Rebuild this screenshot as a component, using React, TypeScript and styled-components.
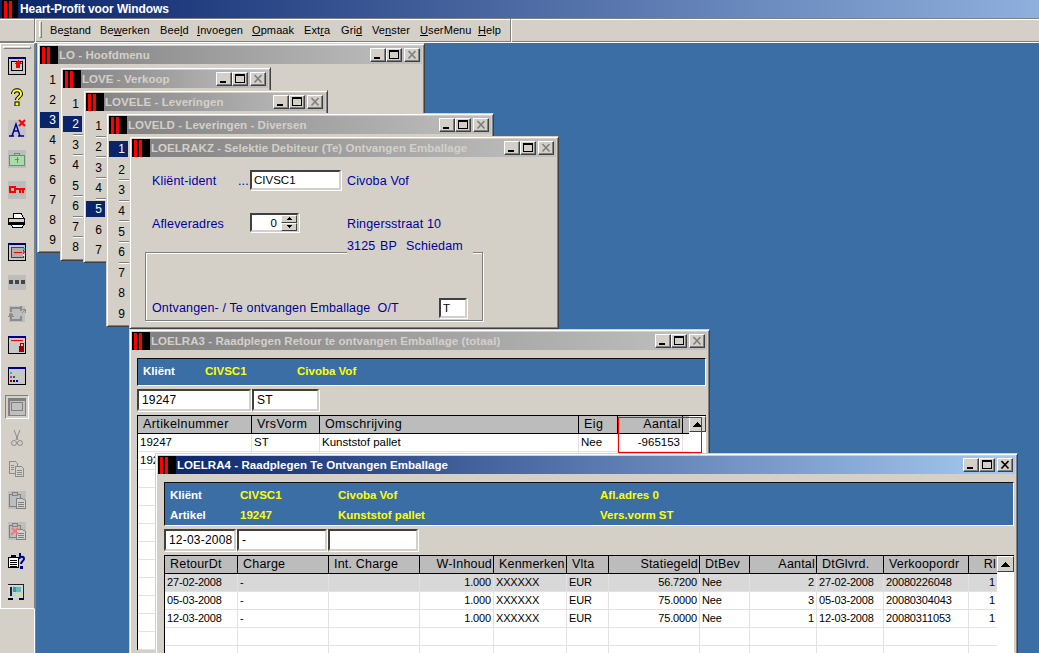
import React from "react";
import styled, { createGlobalStyle } from "styled-components";

const GlobalStyle = createGlobalStyle`
  html, body {
    margin: 0;
    padding: 0;
    overflow: hidden;
    background: #d4d0c8;
  }
  body {
    font-family: "Liberation Sans", Arial, sans-serif;
    font-size: 11px;
    color: #000;
  }
  * {
    box-sizing: border-box;
  }
`;

const Screen = styled.div`
  width: 1039px;
  height: 653px;
  display: flex;
  flex-direction: column;
  overflow: hidden;
  background: #d4d0c8;
`;

const AppTitle = styled.div`
  height: 18px;
  flex: none;
  display: flex;
  align-items: center;
  gap: 2px;
  padding-left: 2px;
  background: linear-gradient(90deg, #0a246a 0%, #8fb0dd 100%);
  color: #fff;
  font-weight: 700;
  font-size: 12px;
  letter-spacing: -0.1px;
`;

const MenuBar = styled.div`
  height: 25px;
  flex: none;
  display: flex;
  background: #d4d0c8;
  border-top: 1px solid #808080;
  border-bottom: 1px solid #fff;
  box-shadow: inset 0 1px 0 #fff, inset 0 -1px 0 #808080;
`;

const MenuSpacer = styled.div`
  width: 36px;
  flex: none;
  border-right: 1px solid #fff;
  box-shadow: inset -1px 0 0 #808080;
`;

const MenuBand = styled.div`
  width: 476px;
  flex: none;
  display: flex;
  align-items: center;
  padding: 0 0 2px 3px;
  border-right: 1px solid #fff;
  box-shadow: inset -1px 0 0 #808080;
`;

const Grip = styled.div`
  width: 3px;
  height: 17px;
  margin-right: 8px;
  border: 1px solid;
  border-color: #fff #808080 #808080 #fff;
`;

const MenuItem = styled.div<{ $w: number }>`
  width: ${(p) => p.$w}px;
  font-size: 11px;
  letter-spacing: 0.1px;
  white-space: nowrap;
  & u {
    text-underline-offset: 1px;
  }
`;

const Body = styled.div`
  flex: 1;
  display: flex;
  min-height: 0;
`;

const ToolColumn = styled.div`
  width: 36px;
  flex: none;
  background: #d4d0c8;
  border-right: 1px solid #808080;
  box-shadow: inset -1px 0 0 #fff;
`;

const ToolBar = styled.div`
  width: 35px;
  height: 566px;
  display: flex;
  flex-direction: column;
  align-items: center;
  padding: 2px 1px 0 0;
  border: 1px solid;
  border-color: #fff #808080 #fff #fff;
  box-shadow: -1px -1px 0 #808080;
`;

const ToolGrip = styled.div`
  width: 28px;
  height: 3px;
  flex: none;
  margin-bottom: 5px;
  border: 1px solid;
  border-color: #fff #808080 #808080 #fff;
`;

const ToolButton = styled.div<{ $pressed?: boolean }>`
  width: 24px;
  height: 24px;
  flex: none;
  margin-bottom: 7px;
  display: flex;
  align-items: center;
  justify-content: center;
  border: 1px solid;
  border-color: ${(p) =>
    p.$pressed ? "#808080 #fff #fff #808080" : "transparent"};
`;

const Desktop = styled.div`
  position: relative;
  flex: 1;
  background: #3a6ea5;
  overflow: hidden;
`;

const Frame = styled.div<{ $x: number; $y: number; $w: number; $h: number }>`
  position: absolute;
  left: ${(p) => p.$x - 36}px;
  top: ${(p) => p.$y - 43}px;
  width: ${(p) => p.$w}px;
  height: ${(p) => p.$h}px;
  padding: 2px;
  background: #d4d0c8;
  border: 1px solid;
  border-color: #d4d0c8 #404040 #404040 #d4d0c8;
  box-shadow: inset 1px 1px 0 #fff, inset -1px -1px 0 #808080;
`;

const Caption = styled.div<{ $active?: boolean }>`
  height: 18px;
  display: flex;
  align-items: center;
  padding-right: 2px;
  background: ${(p) =>
    p.$active
      ? "linear-gradient(90deg, #0a246a, #a6caf0)"
      : "linear-gradient(90deg, #808080, #c0c0c0)"};
  color: ${(p) => (p.$active ? "#fff" : "#d4d0c8")};
  font-weight: 700;
  font-size: 11.5px;
  letter-spacing: 0.05px;
  white-space: nowrap;
  overflow: hidden;
`;

const CaptionText = styled.span`
  flex: 1;
  margin-left: 1px;
`;

const CapButton = styled.div<{ $gap?: boolean; $dim?: boolean }>`
  width: 16px;
  height: 14px;
  flex: none;
  margin-left: ${(p) => (p.$gap ? "2px" : "0")};
  background: #d4d0c8;
  border: 1px solid;
  border-color: #fff #404040 #404040 #fff;
  box-shadow: inset -1px -1px 0 #808080;
  color: ${(p) => (p.$dim ? "#808080" : "#000")};
  & svg {
    display: block;
  }
`;

const MenuList = styled.div<{ $top: number }>`
  padding-top: ${(p) => p.$top}px;
`;

const MenuRow = styled.div<{ $h: number; $rule?: boolean }>`
  position: relative;
  height: ${(p) => p.$h}px;
  display: flex;
  align-items: center;
  ${(p) =>
    p.$rule &&
    `&::before {
      content: "";
      position: absolute;
      top: 0;
      left: 10px;
      width: 10px;
      height: 1px;
      background: #fff;
      box-shadow: 0 -1px 0 #808080;
    }`}
`;

const MenuNumber = styled.div<{ $selected?: boolean }>`
  width: 19px;
  height: 16px;
  line-height: 16px;
  padding-right: 3px;
  text-align: right;
  font-size: 12px;
  background: ${(p) => (p.$selected ? "#0a246a" : "transparent")};
  color: ${(p) => (p.$selected ? "#fff" : "#000")};
`;

const Form = styled.div`
  display: grid;
  grid-template-columns: 86px 12px 91px 1fr;
  grid-template-rows: 20px 19px;
  row-gap: 23px;
  align-items: center;
  padding: 13px 0 0 20px;
  color: #0000a0;
  font-size: 12.5px;
  letter-spacing: 0.15px;
`;

const FormLabel = styled.div`
  padding-top: 2px;
`;

const SunkenBox = styled.div`
  display: flex;
  align-items: center;
  background: #fff;
  color: #000;
  letter-spacing: 0;
  border: 2px solid;
  border-color: #404040 #d4d0c8 #d4d0c8 #404040;
  box-shadow: 1px 1px 0 #fff;
`;

const FormInput = styled(SunkenBox)`
  height: 20px;
  padding-left: 2px;
  font-size: 11.5px;
`;

const Spinner = styled(SunkenBox)`
  width: 49px;
  height: 19px;
  justify-content: flex-end;
  font-size: 11.5px;
  & > span {
    margin-right: 4px;
  }
`;

const SpinButtons = styled.div`
  width: 16px;
  display: flex;
  flex-direction: column;
`;

const SpinButton = styled.div`
  height: 8px;
  background: #d4d0c8;
  border: 1px solid;
  border-color: #fff #404040 #404040 #fff;
  display: flex;
  align-items: center;
  justify-content: center;
`;

const AddressText = styled(FormLabel)`
  margin-left: 6px;
`;

const GroupBox = styled.div`
  position: relative;
  grid-column: 1 / -1;
  margin: -3px 0 0 -7px;
  width: 338px;
  height: 69px;
  display: flex;
  align-items: flex-end;
  justify-content: space-between;
  padding: 0 15px 2px 6px;
  border: 1px solid #808080;
  box-shadow: 1px 1px 0 #fff, inset 1px 1px 0 #fff;
`;

const Legend = styled.div`
  position: absolute;
  left: 201px;
  top: -14px;
  width: 126px;
  height: 17px;
  line-height: 14px;
  white-space: pre;
  word-spacing: 1px;
  background: #d4d0c8;
`;

const GroupLabel = styled.div`
  white-space: pre;
  padding-bottom: 3px;
`;

const GroupInput = styled(SunkenBox)`
  width: 28px;
  height: 20px;
  padding-left: 2px;
  font-size: 11.5px;
`;

const InfoPanel = styled.div<{ $h: number }>`
  height: ${(p) => p.$h}px;
  margin-top: 8px;
  padding: 2px 0 0 5px;
  background: #3a6ea5;
  border: 1px solid;
  border-color: #101010 #fff #fff #101010;
  font-weight: 700;
  font-size: 11.5px;
`;

const InfoRow = styled.div<{ $cols: string }>`
  height: 20px;
  display: grid;
  grid-template-columns: ${(p) => p.$cols};
  align-items: center;
  color: #ffff00;
  & > :first-child {
    color: #fff;
  }
`;

const Fields = styled.div`
  display: flex;
  gap: 1px;
  margin-top: 3px;
`;

const Field = styled(SunkenBox)<{ $w: number }>`
  width: ${(p) => p.$w}px;
  height: 22px;
  padding-left: 3px;
  font-size: 12px;
  letter-spacing: 0.2px;
  white-space: nowrap;
`;

const Content = styled.div<{ $left: number }>`
  padding: 0 1px 0 ${(p) => p.$left}px;
`;

const GridFrame = styled.div`
  display: flex;
  margin-top: 4px;
  border-top: 1px solid #000;
  border-left: 1px solid #000;
  background: #fff;
`;

const GridBody = styled.div`
  flex: 1;
  min-width: 0;
  overflow: hidden;
`;

const GridRow = styled.div<{ $tpl: string; $head?: boolean; $selected?: boolean }>`
  display: grid;
  grid-template-columns: ${(p) => p.$tpl};
  height: 18px;
  background: ${(p) =>
    p.$head ? "#bcbcbc" : p.$selected ? "#d8d8d8" : "#fff"};
  border-bottom: 1px solid ${(p) => (p.$head ? "#000" : "#e2e2e2")};
`;

const HeadCell = styled.div<{ $right?: boolean; $track: number }>`
  padding: 0 ${(p) => (p.$right ? "1px" : "0")} 0 ${(p) => (p.$right ? "0" : "5px")};
  line-height: 17px;
  font-size: 12.5px;
  letter-spacing: ${(p) => p.$track}px;
  text-align: ${(p) => (p.$right ? "right" : "left")};
  border-right: 1px solid #000;
  white-space: nowrap;
  overflow: hidden;
`;

const Cell = styled.div<{ $right?: boolean; $size: number; $track: number }>`
  padding: 0 ${(p) => (p.$right ? "2px" : "0")} 0 ${(p) => (p.$right ? "0" : "2px")};
  line-height: 17px;
  font-size: ${(p) => p.$size}px;
  letter-spacing: ${(p) => p.$track}px;
  text-align: ${(p) => (p.$right ? "right" : "left")};
  border-right: 1px solid #e2e2e2;
  white-space: nowrap;
  overflow: hidden;
`;

const ScrollBar = styled.div`
  width: 17px;
  flex: none;
  background: #fff;
`;

const ScrollUp = styled.div`
  height: 16px;
  display: flex;
  align-items: center;
  justify-content: center;
  background: #d4d0c8;
  border: 1px solid;
  border-color: #fff #404040 #404040 #fff;
`;

const RedMark = styled.div`
  position: absolute;
  left: 488px;
  top: 87px;
  width: 84px;
  height: 36px;
  border: 1px solid #f00;
`;

const CapLogo = ({ w = 18 }: { w?: number }) => (
  <svg width={w} height="18" shapeRendering="crispEdges" style={{ flex: "none" }}>
    <rect width={w} height="18" fill="#000" />
    <rect x="2" y="1" width="3" height="17" fill="#f00" />
    <rect x="7" y="1" width="3" height="17" fill="#f00" />
  </svg>
);

const WinButtons = ({ dim }: { dim?: boolean }) => (
  <>
    <CapButton>
      <svg width="14" height="12" shapeRendering="crispEdges">
        <rect x="3" y="8" width="6" height="2" fill="#000" />
      </svg>
    </CapButton>
    <CapButton>
      <svg width="14" height="12" shapeRendering="crispEdges">
        <rect x="2.5" y="1.5" width="9" height="8" fill="none" stroke="#000" />
        <rect x="2" y="1" width="10" height="2" fill="#000" />
      </svg>
    </CapButton>
    <CapButton $gap $dim={dim}>
      <svg width="14" height="12">
        <path d="M3.5 2 L10.5 9.5 M10.5 2 L3.5 9.5" stroke="currentColor" strokeWidth="1.7" />
      </svg>
    </CapButton>
  </>
);

const Win = (props: {
  x: number;
  y: number;
  w: number;
  h: number;
  title: string;
  active?: boolean;
  children?: React.ReactNode;
}) => (
  <Frame $x={props.x} $y={props.y} $w={props.w} $h={props.h}>
    <Caption $active={props.active}>
      <CapLogo />
      <CaptionText>{props.title}</CaptionText>
      <WinButtons dim={!props.active} />
    </Caption>
    {props.children}
  </Frame>
);

const NumberMenu = (props: {
  count: number;
  pitch: number;
  top: number;
  selected: number;
  rules?: number[];
}) => (
  <MenuList $top={props.top}>
    {Array.from({ length: props.count }, (_, i) => i + 1).map((n) => (
      <MenuRow key={n} $h={props.pitch} $rule={props.rules?.includes(n)}>
        <MenuNumber $selected={n === props.selected}>{n}</MenuNumber>
      </MenuRow>
    ))}
  </MenuList>
);

type Column = { title: string; width: number; right?: boolean };

const Arrow = () => (
  <svg width="9" height="5" shapeRendering="crispEdges">
    <path d="M4 0h1v1h1v1h1v1h1v1h1v1H0V4h1V3h1V2h1V1h1z" fill="#000" />
  </svg>
);

const DataGrid = (props: {
  columns: Column[];
  rows: string[][];
  blank: number;
  selected?: number;
  headTrack: number;
  cellSize: number;
  cellTrack: number;
}) => {
  const tpl = props.columns.map((c) => `${c.width}px`).join(" ");
  return (
    <GridFrame>
      <GridBody>
        <GridRow $tpl={tpl} $head>
          {props.columns.map((c, i) => (
            <HeadCell key={i} $right={c.right} $track={props.headTrack}>
              {c.title}
            </HeadCell>
          ))}
        </GridRow>
        {props.rows.map((r, ri) => (
          <GridRow key={ri} $tpl={tpl} $selected={ri === props.selected}>
            {props.columns.map((c, i) => (
              <Cell key={i} $right={c.right} $size={props.cellSize} $track={props.cellTrack}>
                {r[i]}
              </Cell>
            ))}
          </GridRow>
        ))}
        {Array.from({ length: props.blank }).map((_, ri) => (
          <GridRow key={ri} $tpl={tpl}>
            {props.columns.map((c, i) => (
              <Cell key={i} $size={props.cellSize} $track={0} />
            ))}
          </GridRow>
        ))}
      </GridBody>
      <ScrollBar>
        <ScrollUp>
          <Arrow />
        </ScrollUp>
      </ScrollBar>
    </GridFrame>
  );
};

const Svg = ({ children }: { children: React.ReactNode }) => (
  <svg width="18" height="18" viewBox="0 0 18 18" shapeRendering="crispEdges">
    {children}
  </svg>
);

const WinShell = ({ children }: { children?: React.ReactNode }) => (
  <>
    <rect x="0.5" y="0.5" width="17" height="17" fill="#c8c8c8" stroke="#000" />
    <rect x="0" y="0" width="18" height="2" fill="#000080" />
    {children}
  </>
);

const toolIcons: { key: string; pressed?: boolean; node: React.ReactNode }[] = [
  {
    key: "up",
    node: (
      <WinShell>
        <rect x="3.5" y="4.5" width="11" height="9" fill="#d4d0c8" stroke="#000" />
        <path d="M10 3l4 4h-2v4H8V7H6z" fill="#f00" />
      </WinShell>
    ),
  },
  {
    key: "help",
    node: (
      <g shapeRendering="auto">
        <path d="M5 6c0-5 8-5 8 0c0 3-4 3-4 6" fill="none" stroke="#000" strokeWidth="4" />
        <path d="M5 6c0-5 8-5 8 0c0 3-4 3-4 6" fill="none" stroke="#ff0" strokeWidth="2" />
        <rect x="7" y="14" width="4" height="4" fill="#ff0" stroke="#000" />
      </g>
    ),
  },
  {
    key: "font",
    node: (
      <>
        <rect width="18" height="18" y="1" fill="#c4c4c4" />
        <path d="M1 17h5M10 17h6M4 17L8 5l4 12M5.5 12h5" fill="none" stroke="#000090" strokeWidth="1.5" shapeRendering="auto" />
        <path d="M11 1l6 6M17 1l-6 6" stroke="#f00" strokeWidth="2" shapeRendering="auto" />
      </>
    ),
  },
  {
    key: "case",
    node: (
      <>
        <rect width="18" height="18" fill="#bdbdbd" />
        <rect x="1.5" y="5.5" width="15" height="10" fill="#a8dcA8" stroke="#6c8c78" />
        <path d="M6.5 5V3.5h5V5M9 7v6M7 9h4" fill="none" stroke="#6c8c78" />
      </>
    ),
  },
  {
    key: "key",
    node: (
      <>
        <rect width="18" height="18" fill="#bdbdbd" />
        <rect x="2" y="6" width="5" height="5" fill="none" stroke="#f00" strokeWidth="2" />
        <rect x="7" y="7" width="10" height="2" fill="#f00" />
        <rect x="11" y="9" width="2" height="3" fill="#f00" />
        <rect x="14" y="9" width="2" height="3" fill="#f00" />
      </>
    ),
  },
  {
    key: "print",
    node: (
      <>
        <path d="M5.5 1.5h8l2 5h-10z" fill="#fff" stroke="#000" />
        <rect x="0.5" y="6.5" width="16" height="6" fill="#d4d0c8" stroke="#000" />
        <rect x="1" y="10" width="15" height="2" fill="#000" />
        <path d="M3.5 12.5h12l-1 3h-10z" fill="#fff" stroke="#000" />
      </>
    ),
  },
  {
    key: "window",
    node: (
      <WinShell>
        <rect x="3.5" y="4.5" width="12" height="10" fill="#b0b0b0" stroke="#444" />
        <rect x="6" y="9" width="8" height="1" fill="#f00" />
        <rect x="15" y="5" width="2" height="2" fill="#0cc" />
        <rect x="15" y="8" width="2" height="2" fill="#f0f" />
        <rect x="15" y="11" width="2" height="2" fill="#ff0" />
      </WinShell>
    ),
  },
  {
    key: "dots",
    node: (
      <>
        <rect width="18" height="15" y="1" fill="#bdbdbd" />
        <rect x="1" y="6" width="4" height="4" fill="#444" />
        <rect x="7" y="6" width="4" height="4" fill="#444" />
        <rect x="13" y="6" width="4" height="4" fill="#444" />
      </>
    ),
  },
  {
    key: "swap",
    node: (
      <>
        <rect width="16" height="16" x="1" y="1" fill="#bdbdbd" />
        <path d="M3 7V3h10M13 1v5M3 11v4h10v-4M3 8l2 3H1z" fill="none" stroke="#8c8c8c" strokeWidth="1.2" />
        <path d="M14 4h3v4M14 8l4-4" fill="none" stroke="#8c8c8c" />
      </>
    ),
  },
  {
    key: "lock",
    node: (
      <WinShell>
        <rect x="3" y="4" width="12" height="1" fill="#f00" />
        <rect x="11" y="10" width="5" height="6" fill="#900" />
        <rect x="12" y="7" width="3" height="3" fill="none" stroke="#900" />
      </WinShell>
    ),
  },
  {
    key: "palette",
    node: (
      <WinShell>
        <rect x="2" y="5" width="2" height="2" fill="#0cc" />
        <rect x="2" y="9" width="2" height="2" fill="#f0f" />
        <rect x="5" y="9" width="2" height="2" fill="#080" />
        <rect x="2" y="13" width="2" height="2" fill="#800" />
        <rect x="5" y="13" width="2" height="2" fill="#000" />
        <rect x="8" y="13" width="2" height="2" fill="#00c" />
      </WinShell>
    ),
  },
  {
    key: "pressed",
    pressed: true,
    node: (
      <>
        <rect x="0.5" y="0.5" width="17" height="17" fill="#c0c0c0" stroke="#808080" strokeWidth="2" />
        <rect x="0" y="0" width="18" height="3" fill="#808080" />
        <rect x="3.5" y="4.5" width="11" height="8" fill="#c0c0c0" stroke="#808080" />
      </>
    ),
  },
  {
    key: "cut",
    node: (
      <g fill="none" stroke="#8c8c8c" shapeRendering="auto">
        <path d="M6 1l4 10M12 1L8 11" />
        <circle cx="6" cy="14" r="2.5" />
        <circle cx="12" cy="14" r="2.5" />
      </g>
    ),
  },
  {
    key: "copy",
    node: (
      <g fill="#d4d0c8" stroke="#8c8c8c">
        <path d="M1.5 1.5h6l2 2v10h-8z" />
        <path d="M7.5 6.5h6l2 2v8h-8z" />
        <path d="M9 10h5M9 12h5M9 14h5M3 5h3M3 7h3M3 9h3" />
      </g>
    ),
  },
  {
    key: "paste",
    node: (
      <>
        <rect width="18" height="18" fill="#bdbdbd" />
        <g fill="#bdbdbd" stroke="#808080">
          <rect x="1.5" y="3.5" width="11" height="12" />
          <rect x="4.5" y="1.5" width="5" height="3" />
          <path d="M8.5 7.5h6l3 2v8h-9z" fill="#d0d0d0" />
          <path d="M10 11h6M10 13h6M10 15h6" />
        </g>
      </>
    ),
  },
  {
    key: "pastex",
    node: (
      <>
        <rect width="18" height="18" fill="#bdbdbd" />
        <g fill="#bdbdbd" stroke="#808080">
          <rect x="1.5" y="3.5" width="11" height="12" />
          <rect x="4.5" y="1.5" width="5" height="3" />
          <path d="M8.5 7.5h6l3 2v8h-9z" fill="#d0d0d0" />
          <path d="M10 11h6M10 13h6M10 15h6" />
        </g>
        <path d="M4 6l6 6M10 6l-7 7" stroke="#f87878" strokeWidth="2" shapeRendering="auto" />
      </>
    ),
  },
  {
    key: "notes",
    node: (
      <>
        <rect width="16" height="15" y="1" fill="#d0d0d0" />
        <rect x="0.5" y="4.5" width="10" height="10" fill="#fff" stroke="#000" />
        <rect x="3" y="2" width="5" height="3" fill="#000" />
        <path d="M2 7h7M2 9h7M2 11h7M2 13h7" stroke="#000" />
        <path d="M11 6c1-3 5-3 5 0c0 2-3 2-3 5" fill="none" stroke="#000080" strokeWidth="2" shapeRendering="auto" />
        <rect x="12" y="13" width="3" height="3" fill="#000080" />
        <rect x="11" y="0" width="2" height="4" fill="#000080" />
      </>
    ),
  },
  {
    key: "screen",
    node: (
      <>
        <rect width="16" height="16" fill="#d8d8d8" />
        <path d="M0 .5h15.5V14" fill="none" stroke="#222" />
        <rect x="2" y="2" width="12" height="11" fill="#bcd8d8" />
        <rect x="2" y="3" width="2" height="9" fill="#222" />
        <rect x="5" y="3" width="3" height="5" fill="#3a9a9a" />
        <rect x="8" y="3" width="5" height="5" fill="#6bb" />
        <rect x="8" y="9" width="5" height="3" fill="#dd8" />
        <rect x="0" y="14" width="16" height="2" fill="#000" />
        <rect x="5" y="14" width="6" height="2" fill="#ccc" />
      </>
    ),
  },
];

const menuItems: { before: string; u: string; after: string; w: number }[] = [
  { before: "Be", u: "s", after: "tand", w: 50 },
  { before: "Be", u: "w", after: "erken", w: 60 },
  { before: "Bee", u: "l", after: "d", w: 37 },
  { before: "", u: "I", after: "nvoegen", w: 55 },
  { before: "", u: "O", after: "pmaak", w: 52 },
  { before: "Ext", u: "r", after: "a", w: 37 },
  { before: "Gri", u: "d", after: "", w: 31 },
  { before: "Ve", u: "n", after: "ster", w: 48 },
  { before: "", u: "U", after: "serMenu", w: 58 },
  { before: "", u: "H", after: "elp", w: 30 },
];

const totalColumns: Column[] = [
  { title: "Artikelnummer", width: 114 },
  { title: "VrsVorm", width: 68 },
  { title: "Omschrijving", width: 259 },
  { title: "Eig", width: 39 },
  { title: "Aantal", width: 65, right: true },
  { title: "", width: 7 },
];

const totalRows = [
  ["19247", "ST", "Kunststof pallet", "Nee", "-965153", ""],
  ["19247", "", "", "", "", ""],
];

const detailColumns: Column[] = [
  { title: "RetourDt", width: 73 },
  { title: "Charge", width: 91 },
  { title: "Int. Charge", width: 91 },
  { title: "W-Inhoud", width: 74, right: true },
  { title: "Kenmerken", width: 73 },
  { title: "Vlta", width: 42 },
  { title: "Statiegeld", width: 91, right: true },
  { title: "DtBev", width: 50 },
  { title: "Aantal", width: 67, right: true },
  { title: "DtGlvrd.", width: 67 },
  { title: "Verkoopordr", width: 85 },
  { title: "Rl", width: 29, right: true },
];

const detailRows = [
  ["27-02-2008", "-", "", "1.000", "XXXXXX", "EUR", "56.7200", "Nee", "2", "27-02-2008", "20080226048", "1"],
  ["05-03-2008", "-", "", "1.000", "XXXXXX", "EUR", "75.0000", "Nee", "3", "05-03-2008", "20080304043", "1"],
  ["12-03-2008", "-", "", "1.000", "XXXXXX", "EUR", "75.0000", "Nee", "1", "12-03-2008", "20080311053", "1"],
];

export default function App() {
  return (
    <Screen>
      <GlobalStyle />
      <AppTitle>
        <CapLogo w={16} />
        Heart-Profit voor Windows
      </AppTitle>
      <MenuBar>
        <MenuSpacer />
        <MenuBand>
          <Grip />
          {menuItems.map((m) => (
            <MenuItem key={m.before + m.u} $w={m.w}>
              {m.before}
              <u>{m.u}</u>
              {m.after}
            </MenuItem>
          ))}
        </MenuBand>
      </MenuBar>
      <Body>
        <ToolColumn>
          <ToolBar>
            <ToolGrip />
            {toolIcons.map((t) => (
              <ToolButton key={t.key} $pressed={t.pressed}>
                <Svg>{t.node}</Svg>
              </ToolButton>
            ))}
          </ToolBar>
        </ToolColumn>
        <Desktop>
          <Win x={37} y={43} w={388} h={210} title="LO - Hoofdmenu">
            <NumberMenu count={9} pitch={20} top={6} selected={3} />
          </Win>
          <Win x={60} y={67} w={211} h={194} title="LOVE - Verkoop">
            <NumberMenu count={8} pitch={20.5} top={5.5} selected={2} rules={[3, 4, 6, 7, 8]} />
          </Win>
          <Win x={83} y={90} w={245} h={173} title="LOVELE - Leveringen">
            <NumberMenu count={7} pitch={20.7} top={5} selected={5} rules={[2, 3, 4, 5]} />
          </Win>
          <Win x={106} y={113} w={388} h={214} title="LOVELD - Leveringen - Diversen">
            <NumberMenu count={9} pitch={20.6} top={5} selected={1} rules={[3, 4, 5, 6, 7]} />
          </Win>
          <Win x={129} y={136} w={430} h={193} title="LOELRAKZ - Selektie Debiteur (Te) Ontvangen Emballage">
            <Form>
              <FormLabel>Kliënt-ident</FormLabel>
              <FormLabel>...</FormLabel>
              <FormInput>CIVSC1</FormInput>
              <AddressText>Civoba Vof</AddressText>
              <FormLabel>Afleveradres</FormLabel>
              <div />
              <Spinner>
                <span>0</span>
                <SpinButtons>
                  <SpinButton>
                    <svg width="5" height="3" shapeRendering="crispEdges">
                      <path d="M2 0h1v1h1v1h1v1H0V2h1V1h1z" />
                    </svg>
                  </SpinButton>
                  <SpinButton>
                    <svg width="5" height="3" shapeRendering="crispEdges">
                      <path d="M0 0h5v1H4v1H3v1H2V2H1V1H0z" />
                    </svg>
                  </SpinButton>
                </SpinButtons>
              </Spinner>
              <AddressText>Ringersstraat 10</AddressText>
              <GroupBox>
                <Legend>{"3125 BP  Schiedam"}</Legend>
                <GroupLabel>{"Ontvangen- / Te ontvangen Emballage  O/T"}</GroupLabel>
                <GroupInput>T</GroupInput>
              </GroupBox>
            </Form>
          </Win>
          <Win x={129} y={329} w={581} h={340} title="LOELRA3 - Raadplegen Retour te ontvangen Emballage (totaal)">
            <Content $left={5}>
              <InfoPanel $h={28}>
                <InfoRow $cols="62px 92px 1fr">
                  <div>Kliënt</div>
                  <div>CIVSC1</div>
                  <div>Civoba Vof</div>
                </InfoRow>
              </InfoPanel>
              <Fields>
                <Field $w={114}>19247</Field>
                <Field $w={67}>ST</Field>
              </Fields>
              <DataGrid
                columns={totalColumns}
                rows={totalRows}
                blank={10}
                headTrack={0.4}
                cellSize={11.5}
                cellTrack={0}
              />
            </Content>
            <RedMark />
          </Win>
          <Win x={155} y={453} w={863} h={220} title="LOELRA4 - Raadplegen Te Ontvangen Emballage" active>
            <Content $left={6}>
              <InfoPanel $h={44}>
                <InfoRow $cols="70px 98px 262px 1fr">
                  <div>Kliënt</div>
                  <div>CIVSC1</div>
                  <div>Civoba Vof</div>
                  <div>Afl.adres 0</div>
                </InfoRow>
                <InfoRow $cols="70px 98px 262px 1fr">
                  <div>Artikel</div>
                  <div>19247</div>
                  <div>Kunststof pallet</div>
                  <div>Vers.vorm ST</div>
                </InfoRow>
              </InfoPanel>
              <Fields>
                <Field $w={72}>12-03-2008</Field>
                <Field $w={90}>-</Field>
                <Field $w={90} />
              </Fields>
              <DataGrid
                columns={detailColumns}
                rows={detailRows}
                blank={3}
                selected={0}
                headTrack={0.2}
                cellSize={11}
                cellTrack={-0.15}
              />
            </Content>
          </Win>
        </Desktop>
      </Body>
    </Screen>
  );
}
